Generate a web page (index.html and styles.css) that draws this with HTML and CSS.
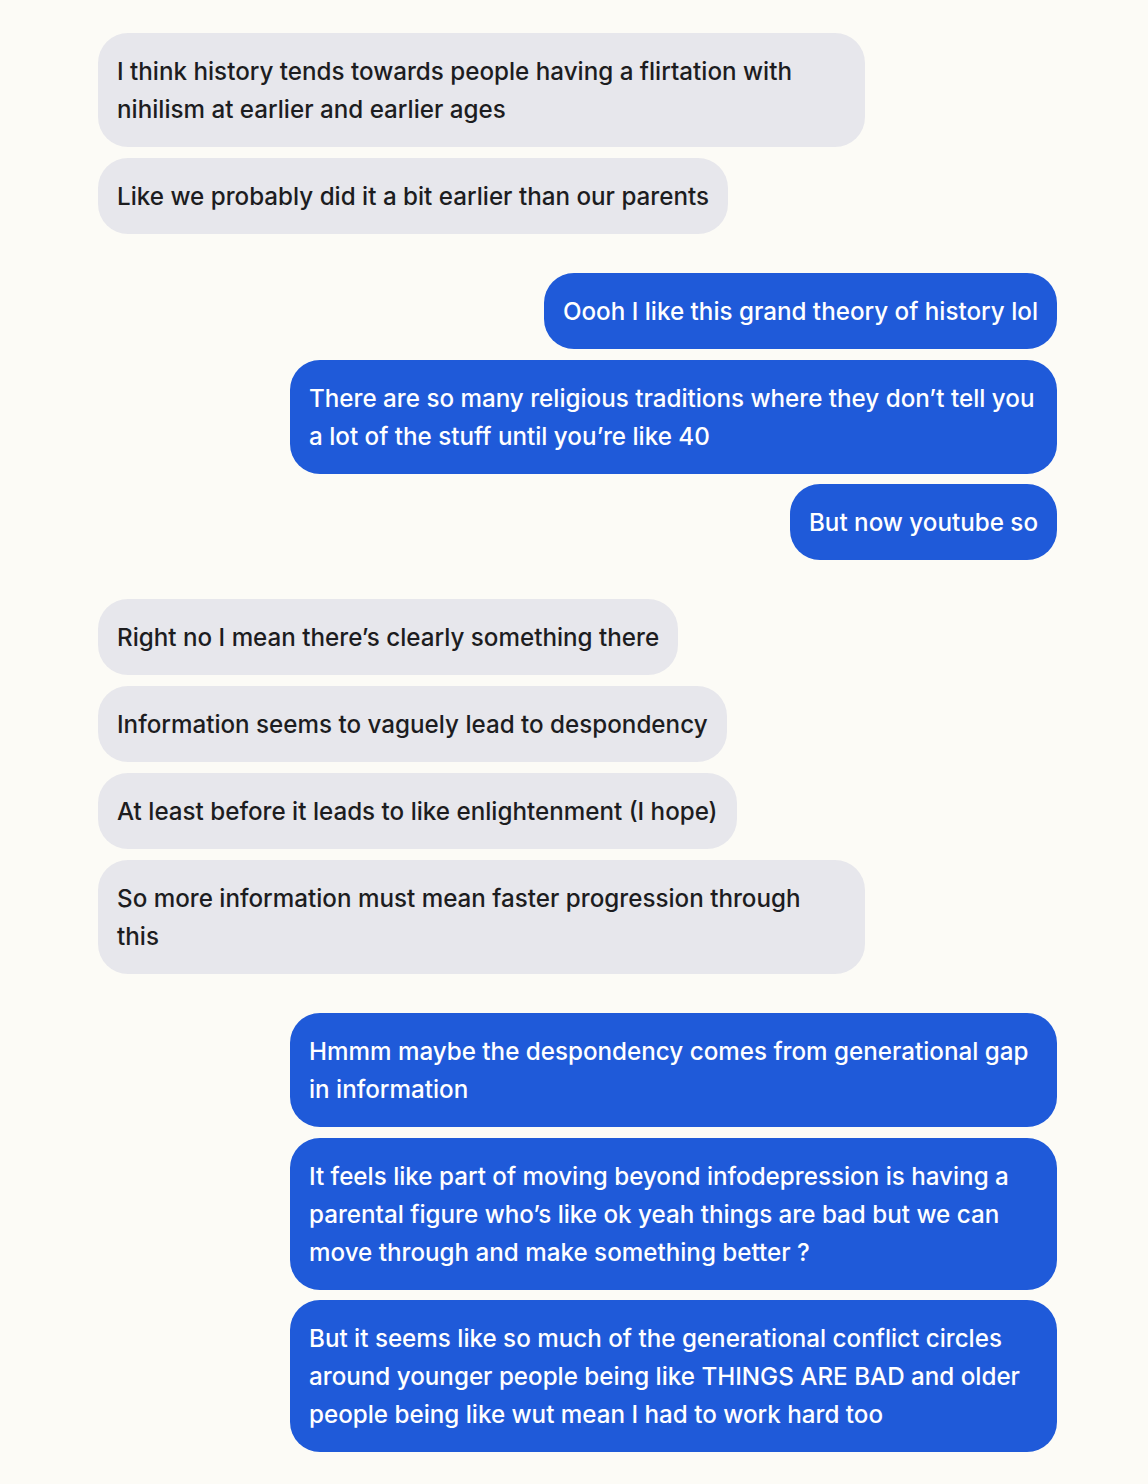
FILE: index.html
```html
<!DOCTYPE html>
<html lang="en">
<head>
<meta charset="utf-8">
<title>Conversation</title>
<link rel="stylesheet" href="styles.css">
</head>
<body>
<main class="chat">
  <section class="group them">
    <p class="bubble">I think history tends towards people having a flirtation with nihilism at earlier and earlier ages</p>
    <p class="bubble">Like we probably did it a bit earlier than our parents</p>
  </section>
  <section class="group me">
    <p class="bubble">Oooh I like this grand theory of history lol</p>
    <p class="bubble">There are so many religious traditions where they don’t tell you a lot of the stuff until you’re like 40</p>
    <p class="bubble">But now youtube so</p>
  </section>
  <section class="group them">
    <p class="bubble">Right no I mean there’s clearly something there</p>
    <p class="bubble">Information seems to vaguely lead to despondency</p>
    <p class="bubble">At least before it leads to like enlightenment (I hope)</p>
    <p class="bubble">So more information must mean faster progression through this</p>
  </section>
  <section class="group me">
    <p class="bubble">Hmmm maybe the despondency comes from generational gap in information</p>
    <p class="bubble">It feels like part of moving beyond infodepression is having a parental figure who’s like ok yeah things are bad but we can move through and make something better ?</p>
    <p class="bubble">But it seems like so much of the generational conflict circles around younger people being like THINGS ARE BAD and older people being like wut mean I had to work hard too</p>
  </section>
</main>
</body>
</html>
```
FILE: styles.css
```css
html, body {
  margin: 0;
  padding: 0;
  background: #fcfbf6;
}
body {
  font-family: Inter, "Noto Sans", sans-serif;
  font-size: 24.2px;
  font-weight: 500;
  line-height: 38px;
  color: #1d1d1f;
}
.chat {
  width: 959px;
  margin: 0 0 0 98px;
  padding: 33px 0 30px;
  display: flex;
  flex-direction: column;
  gap: 39px;
}
.group {
  display: flex;
  flex-direction: column;
  gap: 10.8px;
}
.them { align-items: flex-start; }
.me { align-items: flex-end; }
.bubble {
  margin: 0;
  max-width: 729px;
  padding: 20px 19px 18px;
  border-radius: 30px;
}
.them .bubble {
  background: #e7e7ec;
  color: #1d1d1f;
}
.me .bubble {
  background: #1f5ad9;
  color: #ffffff;
}
```
